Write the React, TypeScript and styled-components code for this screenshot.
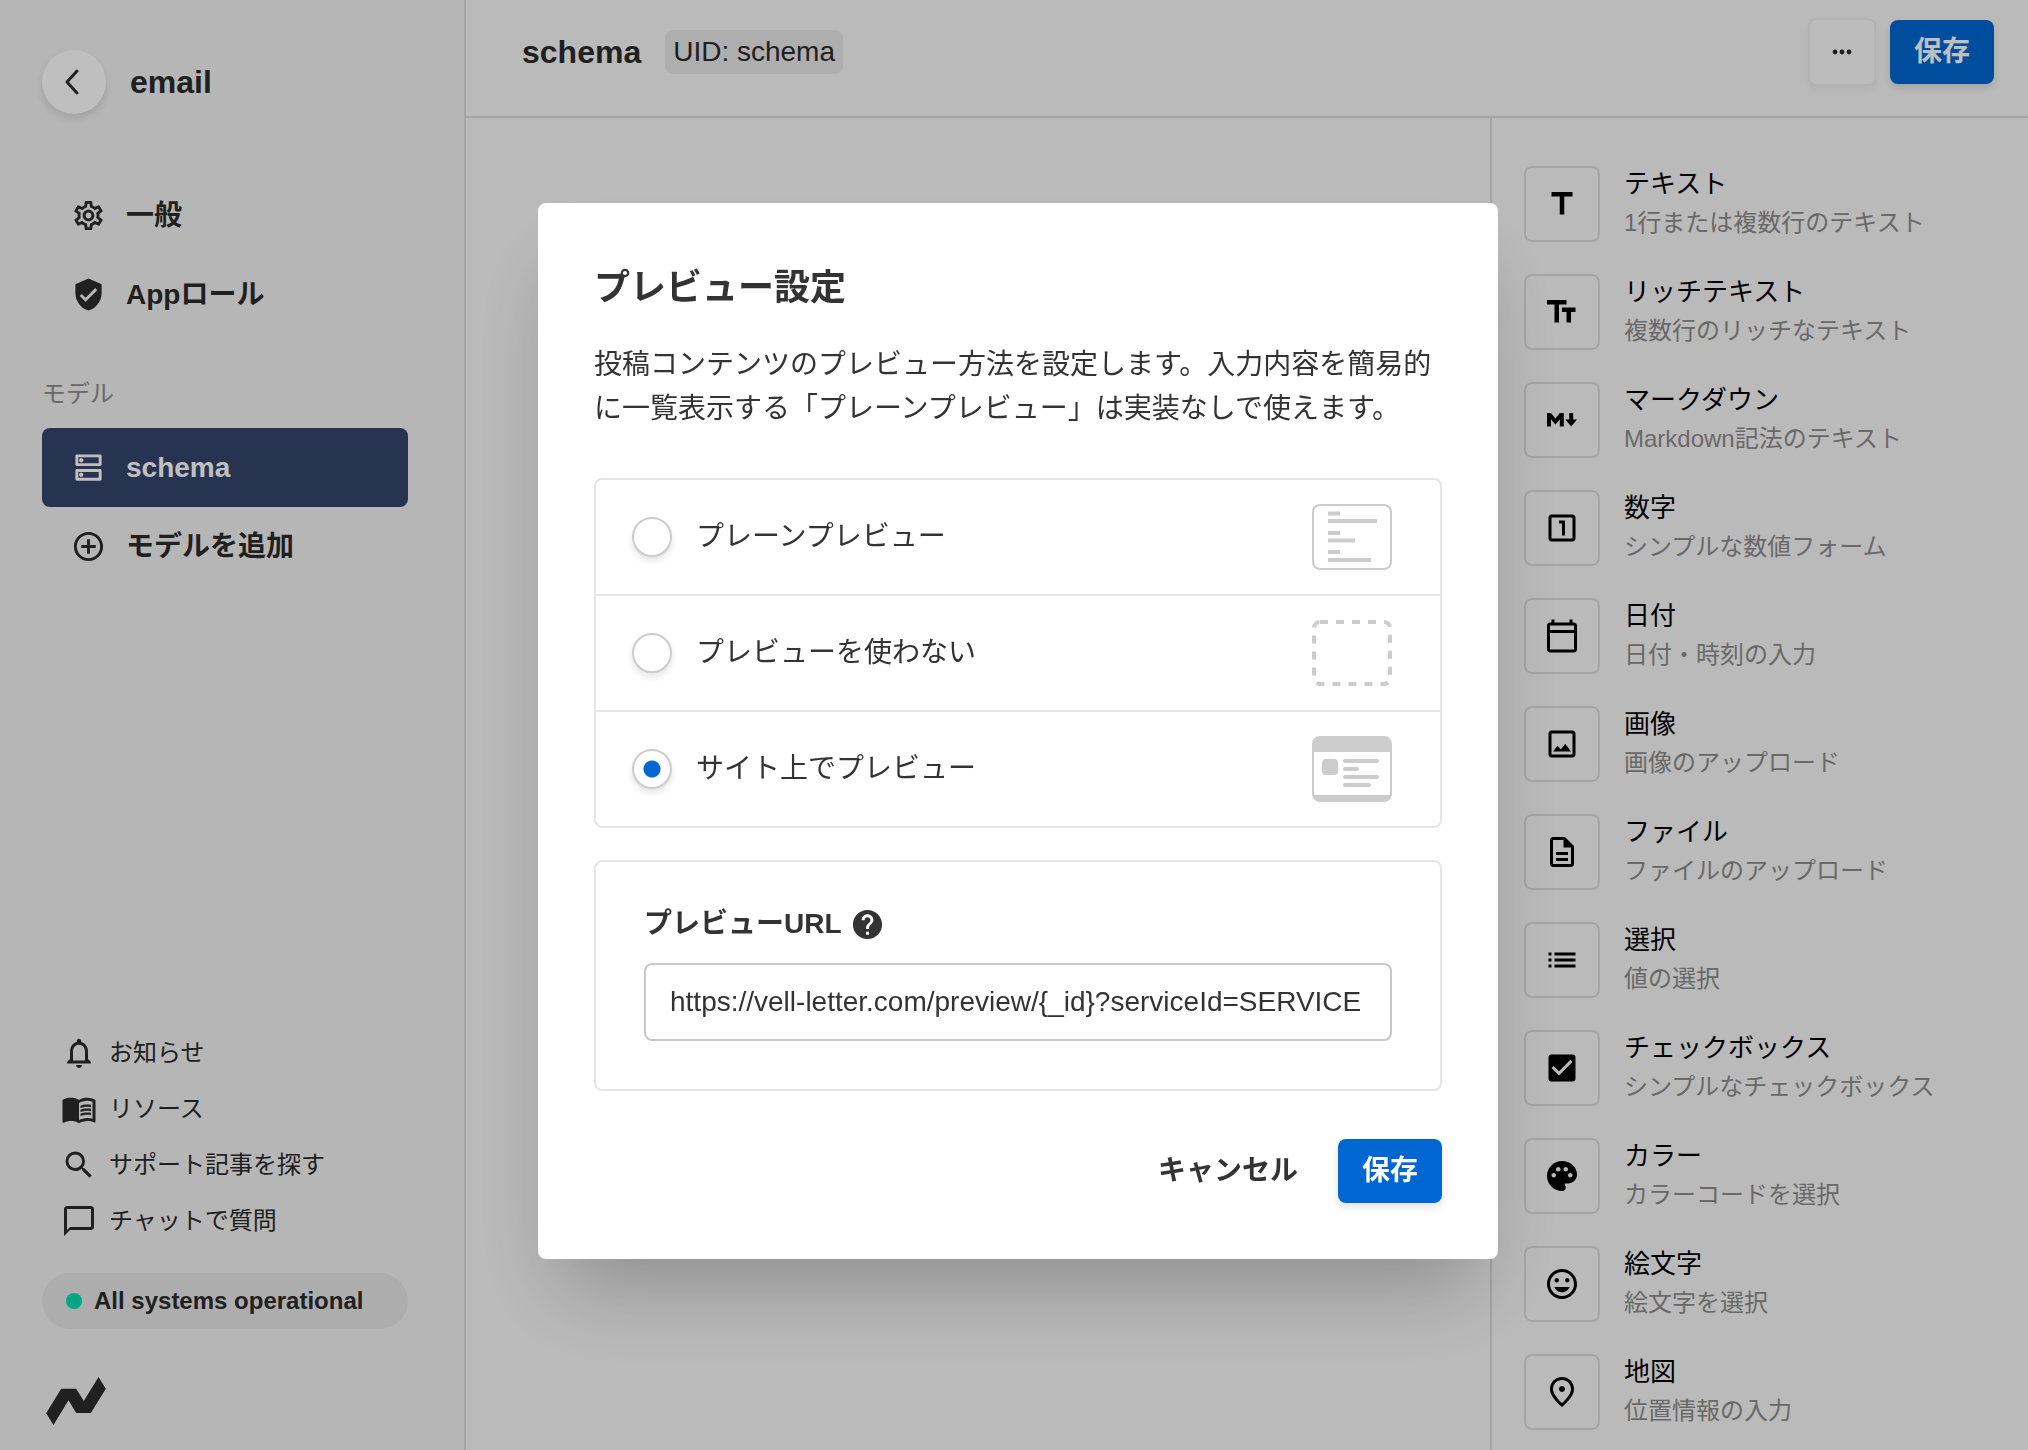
import React, { useState } from 'react';
import styled, { createGlobalStyle } from 'styled-components';
import {
  MdAddCircleOutline,
  MdCheckBox,
  MdChatBubbleOutline,
  MdHelp,
  MdInsertEmoticon,
  MdList,
  MdMenuBook,
  MdNotificationsNone,
  MdOutlineCalendarToday,
  MdOutlineDescription,
  MdOutlineDns,
  MdOutlineImage,
  MdOutlineLooksOne,
  MdOutlinePlace,
  MdOutlineSettings,
  MdPalette,
  MdSearch,
  MdTitle,
  MdVerifiedUser,
} from 'react-icons/md';

const GlobalStyle = createGlobalStyle`
  *, *::before, *::after { box-sizing: border-box; }
  body {
    margin: 0;
    color: #2b2b2b;
    font-family: "Liberation Sans", "Noto Sans CJK JP", sans-serif;
    font-size: 28px;
    line-height: 1.5;
  }
  button, input { font: inherit; color: inherit; }
  button { border: 0; padding: 0; background: none; cursor: pointer; }
  a { color: inherit; text-decoration: none; }
  h1, h2, p, ul { margin: 0; padding: 0; }
  ul { list-style: none; }
  svg { display: block; flex: none; }
`;

const Page = styled.div`
  display: flex;
  height: 100vh;
  overflow: hidden;
  background: #f9f9f9;
`;

/* ---------- sidebar ---------- */

const Sidebar = styled.aside`
  display: flex;
  flex-direction: column;
  flex: none;
  width: 466px;
  padding: 50px 56px 25px 42px;
  border-right: 2px solid #dcdcdc;
  background: #f3f3f3;
`;

const SidebarHead = styled.div`
  display: flex;
  align-items: center;
  gap: 24px;
  margin-bottom: 62px;
`;

const BackButton = styled.button`
  display: flex;
  align-items: center;
  justify-content: center;
  width: 64px;
  height: 64px;
  padding-right: 4px;
  border-radius: 50%;
  background: #fff;
  box-shadow: 0 4px 8px rgba(0, 0, 0, 0.12);
`;

const ServiceName = styled.h1`
  font-size: 32px;
  line-height: 44px;
`;

const NavLink = styled.a<{ $active?: boolean }>`
  display: flex;
  align-items: center;
  gap: 20px;
  height: 79px;
  padding: 0 29px;
  border-radius: 8px;
  font-weight: 700;
  color: ${(p) => (p.$active ? '#fff' : 'inherit')};
  background: ${(p) => (p.$active ? '#35466c' : 'none')};
`;

const NavHeading = styled.p`
  margin: 40px 0 14px;
  font-size: 24px;
  line-height: 40px;
  color: #8c8c8c;
`;

const SupportList = styled.ul`
  margin-top: auto;
`;

const SupportLink = styled.a`
  display: flex;
  align-items: center;
  gap: 12px;
  height: 56px;
  padding-left: 19px;
  font-size: 24px;
`;

const StatusPill = styled.a`
  display: flex;
  align-items: center;
  gap: 12px;
  height: 56px;
  margin: 24px 0 48px;
  padding: 0 24px;
  border-radius: 28px;
  font-size: 24px;
  font-weight: 700;
  background: #e7e7e7;
`;

const StatusDot = styled.span`
  width: 16px;
  height: 16px;
  border-radius: 50%;
  background: #00dfaf;
`;

const LogoLink = styled.a`
  padding-left: 4px;
`;

/* ---------- main area ---------- */

const Main = styled.main`
  display: flex;
  flex: 1;
  flex-direction: column;
  min-width: 0;
`;

const TopBar = styled.header`
  display: flex;
  align-items: flex-start;
  height: 118px;
  padding: 18px 34px 0 56px;
  border-bottom: 2px solid #dcdcdc;
`;

const ModelTitle = styled.h2`
  margin: 12px 24px 0 0;
  font-size: 32px;
  line-height: 44px;
`;

const Uid = styled.span`
  margin-top: 12px;
  padding: 0 8px;
  border-radius: 8px;
  line-height: 44px;
  background: #e9e9e9;
`;

const TopActions = styled.div`
  display: flex;
  align-items: center;
  gap: 14px;
  margin-left: auto;
`;

const MoreButton = styled.button`
  display: flex;
  align-items: center;
  justify-content: center;
  width: 68px;
  height: 68px;
  border: 2px solid #eee;
  border-radius: 8px;
  background: #fbfbfb;
  box-shadow: 0 4px 8px rgba(0, 0, 0, 0.06);
`;

const PrimaryButton = styled.button`
  width: 104px;
  height: 64px;
  border-radius: 8px;
  font-weight: 700;
  color: #fff;
  background: #0067d2;
  box-shadow: 0 4px 8px rgba(0, 0, 0, 0.12);
`;

const Workspace = styled.div`
  display: flex;
  flex: 1;
  min-height: 0;
`;

const Canvas = styled.section`
  flex: 1;
`;

const FieldPanel = styled.ul`
  display: flex;
  flex-direction: column;
  flex: none;
  gap: 32px;
  width: 538px;
  padding: 48px 32px 0;
  border-left: 2px solid #dcdcdc;
`;

const FieldButton = styled.button`
  display: flex;
  align-items: center;
  gap: 24px;
  width: 100%;
  text-align: left;
`;

const FieldIcon = styled.span`
  display: flex;
  align-items: center;
  justify-content: center;
  width: 76px;
  height: 76px;
  border: 2px solid #dcdcdc;
  border-radius: 8px;
  color: #000;
`;

const FieldText = styled.span`
  display: flex;
  flex-direction: column;
  gap: 2px;
`;

const FieldName = styled.span`
  font-size: 26px;
  line-height: 36px;
  color: #000;
`;

const FieldNote = styled.span`
  font-size: 24px;
  line-height: 38px;
  color: #8c8c8c;
`;

/* ---------- modal ---------- */

const Overlay = styled.div`
  position: fixed;
  inset: 0;
  display: flex;
  align-items: center;
  justify-content: center;
  padding: 12px 0 0 8px;
  background: rgba(0, 0, 0, 0.25);
`;

const Dialog = styled.form`
  width: 960px;
  padding: 56px;
  border-radius: 8px;
  color: #333;
  background: #fff;
  box-shadow: 0 48px 80px -20px rgba(0, 0, 0, 0.24);
`;

const DialogTitle = styled.h2`
  font-size: 36px;
  line-height: 58px;
`;

const DialogText = styled.p`
  margin: 26px 0 47px;
  line-height: 44px;
`;

const Options = styled.div`
  border: 2px solid #e5e5e5;
  border-radius: 8px;
`;

const Option = styled.label`
  display: flex;
  align-items: center;
  gap: 24px;
  height: 114px;
  padding: 0 48px 0 36px;
  cursor: pointer;

  & + & {
    height: 116px;
    border-top: 2px solid #e5e5e5;
  }

  svg { margin-left: auto; }
`;

const Radio = styled.input`
  appearance: none;
  width: 40px;
  height: 40px;
  margin: 0;
  border: 2px solid #ccc;
  border-radius: 50%;
  background: #fff;
  box-shadow: 0 4px 6px rgba(0, 0, 0, 0.1);

  &:checked {
    background: radial-gradient(circle, #0067d2 0 8px, #fff 9px);
  }
`;

const UrlBox = styled.div`
  margin-top: 32px;
  padding: 40px 48px 48px;
  border: 2px solid #e5e5e5;
  border-radius: 8px;
`;

const UrlHead = styled.div`
  display: flex;
  align-items: center;
  gap: 8px;
  height: 44px;
  margin-bottom: 17px;
  font-weight: 700;
`;

const UrlInput = styled.input`
  display: block;
  width: 100%;
  height: 78px;
  padding: 0 24px;
  border: 2px solid #c8c8c8;
  border-radius: 8px;
  background: #fff;
  outline: none;
`;

const DialogActions = styled.div`
  display: flex;
  align-items: center;
  justify-content: flex-end;
  gap: 16px;
  margin-top: 48px;
`;

const CancelButton = styled.button`
  height: 64px;
  padding: 0 24px;
  font-weight: 700;
`;

/* ---------- drawings ---------- */

const ChevronIcon = () => (
  <svg width="16" height="26" viewBox="0 0 16 26" fill="none" stroke="currentColor" strokeWidth="3" strokeLinecap="round" strokeLinejoin="round">
    <path d="M13 2 3 13l10 11" />
  </svg>
);

const DotsIcon = () => (
  <svg width="20" height="6" viewBox="0 0 20 6" fill="currentColor">
    <circle cx="3" cy="3" r="2.4" />
    <circle cx="10" cy="3" r="2.4" />
    <circle cx="17" cy="3" r="2.4" />
  </svg>
);

const RichTextIcon = () => (
  <svg width="36" height="36" viewBox="0 0 24 24" fill="currentColor">
    <path d="M2 4v3h5v12h3V7h5V4H2zm19 5h-9v3h3v7h3v-7h3V9z" />
  </svg>
);

const MarkdownIcon = () => (
  <svg width="30" height="14" viewBox="0 0 30 14" fill="currentColor">
    <path d="M0 13.5V0h4l4.4 5.5L12.8 0h4v13.5h-4V6.2l-4.4 5.4L4 6.2v7.3zM22.2 0h4v6.5H30l-5.8 7-5.8-7h3.8z" />
  </svg>
);

const Logo = () => (
  <svg width="60" height="48" viewBox="0 0 179 144" fill="currentColor">
    <path d="M157 0 179 35 134 108H90L67 70 22 144 0 109 45 35H90L113 72z" />
  </svg>
);

const PlainPreviewArt = () => (
  <svg width="80" height="66" viewBox="0 0 80 66" fill="none" stroke="#ccc" strokeWidth="4">
    <rect x="1" y="1" width="78" height="64" rx="7" strokeWidth="2" fill="#fff" />
    <path d="M16 9.5h12M16 17h49M16 29h12M16 36.5h27M16 48h12M16 56h43" />
  </svg>
);

const NoPreviewArt = () => (
  <svg width="80" height="66" viewBox="0 0 80 66" fill="none" stroke="#ccc" strokeWidth="4">
    <rect x="2" y="2" width="76" height="62" rx="6" strokeDasharray="8 8" />
  </svg>
);

const SitePreviewArt = () => (
  <svg width="80" height="66" viewBox="0 0 80 66">
    <rect width="80" height="66" rx="8" fill="#ccc" />
    <path fill="#fff" d="M2 16h76v43H2z" />
    <rect x="10" y="23" width="16" height="16" rx="4" fill="#ccc" />
    <path d="M33 25h32M33 33h12M33 41h32M33 49h24" stroke="#ccc" strokeWidth="4" strokeLinecap="round" />
  </svg>
);

/* ---------- data ---------- */

const NAV_ICON = 35;
const FIELD_ICON = 36;

const supportLinks = [
  { label: 'お知らせ', Icon: MdNotificationsNone },
  { label: 'リソース', Icon: MdMenuBook },
  { label: 'サポート記事を探す', Icon: MdSearch },
  { label: 'チャットで質問', Icon: MdChatBubbleOutline },
];

const fields = [
  { name: 'テキスト', note: '1行または複数行のテキスト', icon: <MdTitle size={FIELD_ICON} /> },
  { name: 'リッチテキスト', note: '複数行のリッチなテキスト', icon: <RichTextIcon /> },
  { name: 'マークダウン', note: 'Markdown記法のテキスト', icon: <MarkdownIcon /> },
  { name: '数字', note: 'シンプルな数値フォーム', icon: <MdOutlineLooksOne size={FIELD_ICON} /> },
  { name: '日付', note: '日付・時刻の入力', icon: <MdOutlineCalendarToday size={FIELD_ICON} /> },
  { name: '画像', note: '画像のアップロード', icon: <MdOutlineImage size={FIELD_ICON} /> },
  { name: 'ファイル', note: 'ファイルのアップロード', icon: <MdOutlineDescription size={FIELD_ICON} /> },
  { name: '選択', note: '値の選択', icon: <MdList size={FIELD_ICON} /> },
  { name: 'チェックボックス', note: 'シンプルなチェックボックス', icon: <MdCheckBox size={FIELD_ICON} /> },
  { name: 'カラー', note: 'カラーコードを選択', icon: <MdPalette size={FIELD_ICON} /> },
  { name: '絵文字', note: '絵文字を選択', icon: <MdInsertEmoticon size={FIELD_ICON} /> },
  { name: '地図', note: '位置情報の入力', icon: <MdOutlinePlace size={FIELD_ICON} /> },
];

const previewModes = [
  { id: 'plain', label: 'プレーンプレビュー', art: <PlainPreviewArt /> },
  { id: 'none', label: 'プレビューを使わない', art: <NoPreviewArt /> },
  { id: 'site', label: 'サイト上でプレビュー', art: <SitePreviewArt /> },
];

export default function App() {
  const [mode, setMode] = useState('site');
  const [url, setUrl] = useState('https://vell-letter.com/preview/{_id}?serviceId=SERVICE');

  return (
    <>
      <GlobalStyle />
      <Page>
        <Sidebar>
          <SidebarHead>
            <BackButton type="button" aria-label="戻る">
              <ChevronIcon />
            </BackButton>
            <ServiceName>email</ServiceName>
          </SidebarHead>
          <nav>
            <NavLink href="#general">
              <MdOutlineSettings size={NAV_ICON} />
              一般
            </NavLink>
            <NavLink href="#roles">
              <MdVerifiedUser size={NAV_ICON} />
              Appロール
            </NavLink>
            <NavHeading>モデル</NavHeading>
            <NavLink href="#schema" $active>
              <MdOutlineDns size={NAV_ICON} />
              schema
            </NavLink>
            <NavLink href="#add-model">
              <MdAddCircleOutline size={NAV_ICON} />
              モデルを追加
            </NavLink>
          </nav>
          <SupportList>
            {supportLinks.map(({ label, Icon }) => (
              <li key={label}>
                <SupportLink href="#support">
                  <Icon size={FIELD_ICON} />
                  {label}
                </SupportLink>
              </li>
            ))}
          </SupportList>
          <StatusPill href="#status">
            <StatusDot />
            All systems operational
          </StatusPill>
          <LogoLink href="#home" aria-label="ホーム">
            <Logo />
          </LogoLink>
        </Sidebar>

        <Main>
          <TopBar>
            <ModelTitle>schema</ModelTitle>
            <Uid>UID: schema</Uid>
            <TopActions>
              <MoreButton type="button" aria-label="その他">
                <DotsIcon />
              </MoreButton>
              <PrimaryButton type="button">保存</PrimaryButton>
            </TopActions>
          </TopBar>
          <Workspace>
            <Canvas />
            <FieldPanel>
              {fields.map((field) => (
                <li key={field.name}>
                  <FieldButton type="button">
                    <FieldIcon>{field.icon}</FieldIcon>
                    <FieldText>
                      <FieldName>{field.name}</FieldName>
                      <FieldNote>{field.note}</FieldNote>
                    </FieldText>
                  </FieldButton>
                </li>
              ))}
            </FieldPanel>
          </Workspace>
        </Main>
      </Page>

      <Overlay>
        <Dialog role="dialog" aria-labelledby="dialog-title" onSubmit={(e) => e.preventDefault()}>
          <DialogTitle id="dialog-title">プレビュー設定</DialogTitle>
          <DialogText>
            投稿コンテンツのプレビュー方法を設定します。入力内容を簡易的に一覧表示する「プレーンプレビュー」は実装なしで使えます。
          </DialogText>
          <Options role="radiogroup" aria-labelledby="dialog-title">
            {previewModes.map(({ id, label, art }) => (
              <Option key={id}>
                <Radio type="radio" name="preview" value={id} checked={mode === id} onChange={() => setMode(id)} />
                <span>{label}</span>
                {art}
              </Option>
            ))}
          </Options>
          <UrlBox>
            <UrlHead>
              <label htmlFor="preview-url">プレビューURL</label>
              <MdHelp size={NAV_ICON} />
            </UrlHead>
            <UrlInput id="preview-url" type="text" value={url} onChange={(e) => setUrl(e.target.value)} />
          </UrlBox>
          <DialogActions>
            <CancelButton type="button">キャンセル</CancelButton>
            <PrimaryButton type="submit">保存</PrimaryButton>
          </DialogActions>
        </Dialog>
      </Overlay>
    </>
  );
}
